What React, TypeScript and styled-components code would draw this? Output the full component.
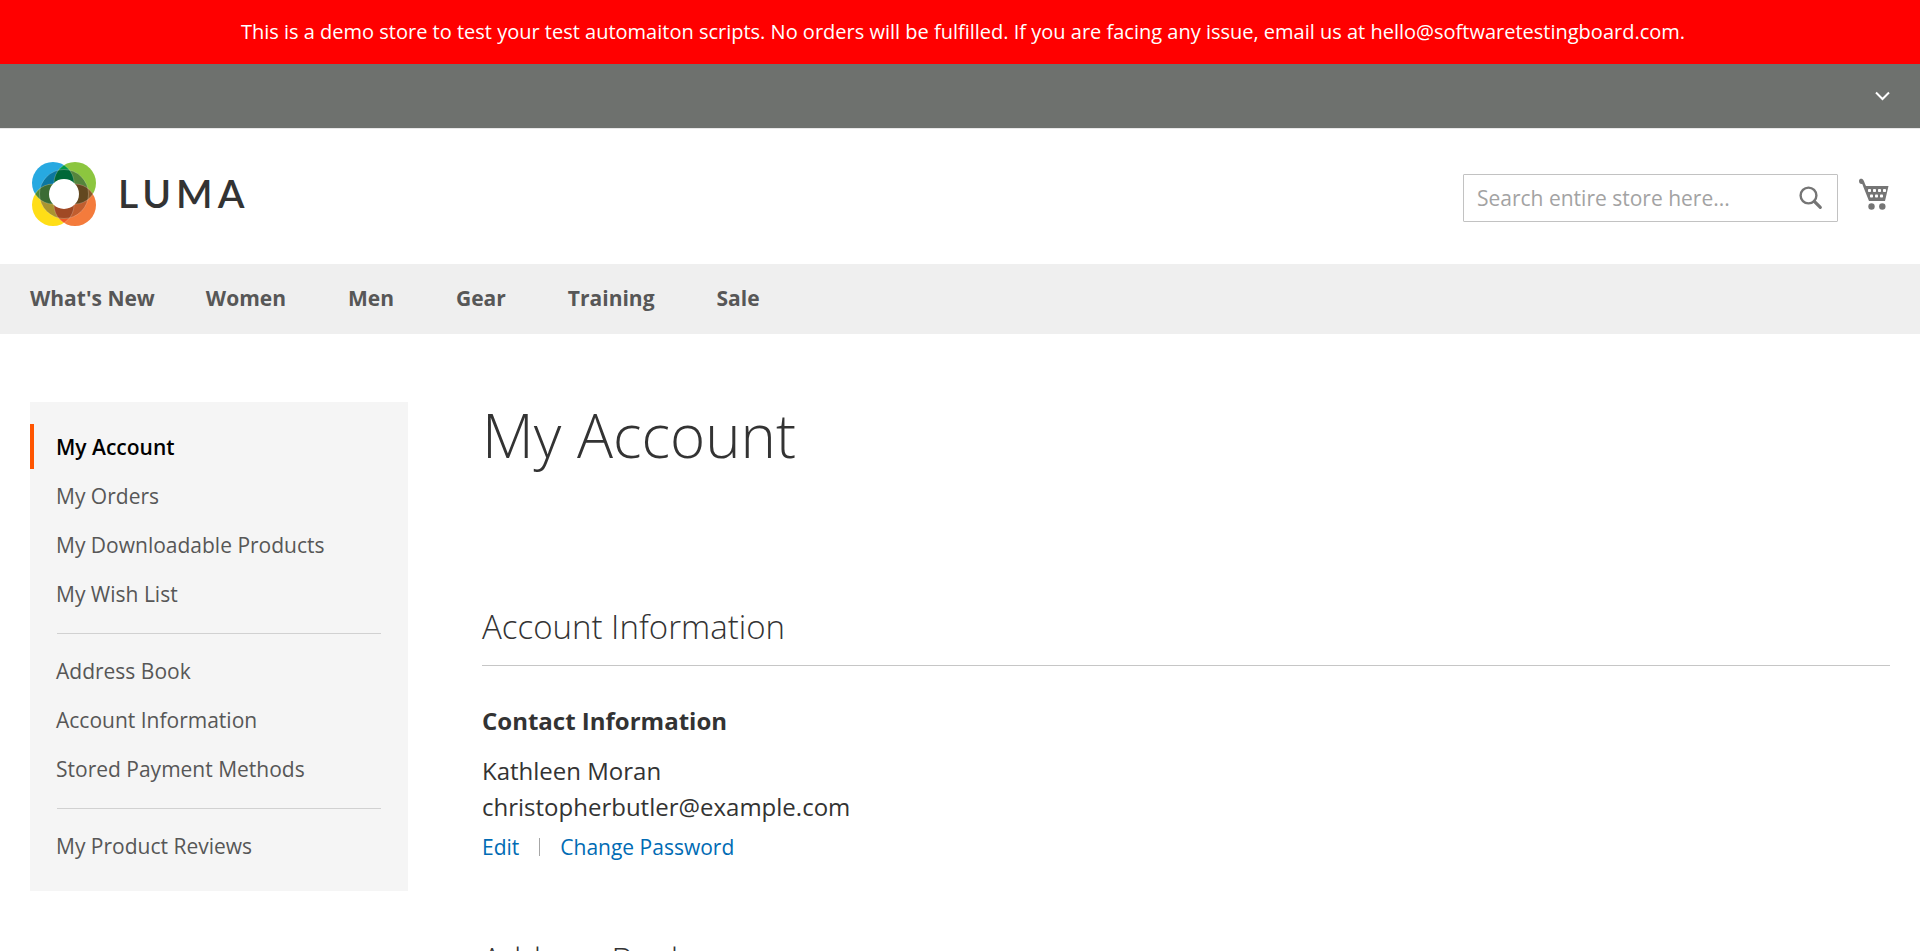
import React from "react";
import styled, { createGlobalStyle } from "styled-components";

const GlobalStyle = createGlobalStyle`
  *, *::before, *::after { box-sizing: border-box; }
  body {
    margin: 0;
    background: #fff;
    color: #333;
    font-family: "Open Sans", "Noto Sans", sans-serif;
    font-size: 21px;
    line-height: 30px;
  }
  ul { margin: 0; padding: 0; list-style: none; }
  h1, h2, h3, p, address { margin: 0; }
  a { text-decoration: none; }
  svg { display: block; }
`;

const DemoNotice = styled.p`
  padding: 17px 20px 17px 26px;
  background: #f00;
  color: #fff;
  font-size: 20px;
  text-align: center;
`;

const Panel = styled.div`
  display: flex;
  align-items: center;
  justify-content: flex-end;
  height: 65px;
  padding: 0 30px;
  background: #6e716e;
  border-bottom: 1px solid #e8e8e8;
`;

const IconButton = styled.button`
  display: flex;
  padding: 0;
  border: 0;
  background: none;
  cursor: pointer;
`;

const Header = styled.header`
  display: flex;
  align-items: flex-start;
  justify-content: space-between;
  padding: 33px 30px 38px;
`;

const Brand = styled.a`
  display: flex;
  align-items: flex-start;
  gap: 22px;
  padding-left: 2px;
  color: #333;
`;

const Wordmark = styled.span`
  font-family: Lato, sans-serif;
  font-size: 39px;
  font-weight: 600;
  line-height: 62px;
  letter-spacing: 5px;
`;

const Tools = styled.div`
  display: flex;
  gap: 20px;
  padding-top: 12px;
`;

const SearchForm = styled.form`
  display: flex;
  align-items: center;
  width: 375px;
  height: 48px;
  padding: 0 14px 0 13px;
  border: 1px solid #c2c2c2;
  border-radius: 1px;
`;

const SearchInput = styled.input`
  flex: 1;
  min-width: 0;
  height: 46px;
  padding: 0;
  border: 0;
  outline: 0;
  background: none;
  color: #333;
  font: inherit;
  &::placeholder { color: #a3a3a3; opacity: 1; }
`;

const CartLink = styled.a`
  padding-top: 4px;
  color: #757575;
`;

const NavBar = styled.nav`
  padding: 0 30px 2px;
  background: #efefef;
`;

const NavList = styled.ul`
  display: flex;
  gap: 62px;
`;

const NavItem = styled.li<{ $tight?: boolean }>`
  margin-right: ${(p) => (p.$tight ? "-11px" : "0")};
`;

const NavLink = styled.a`
  color: #575757;
  font-weight: 700;
  line-height: 68px;
`;

const Page = styled.main`
  display: flex;
  align-items: flex-start;
  gap: 74px;
  padding: 68px 30px 60px;
`;

const Sidebar = styled.aside`
  flex: 0 0 378px;
  padding: 22px 0 23px;
  background: #f5f5f5;
`;

const SideGroup = styled.ul`
  display: flex;
  flex-direction: column;
  gap: 4px;
`;

const SideDivider = styled.hr`
  height: 1px;
  margin: 17px 27px 14px;
  border: 0;
  background: #d1d1d1;
`;

const SideLink = styled.a<{ $active?: boolean }>`
  display: block;
  padding: 2px 0 0 22px;
  border-left: 4px solid ${(p) => (p.$active ? "#ff5501" : "transparent")};
  color: ${(p) => (p.$active ? "#000" : "#575757")};
  font-weight: ${(p) => (p.$active ? 600 : 400)};
  line-height: 43px;
`;

const Content = styled.div`
  flex: 1;
  min-width: 0;
`;

const PageTitle = styled.h1`
  margin-bottom: 141px;
  font-size: 60px;
  font-weight: 300;
  line-height: 66px;
`;

const Block = styled.section`
  margin-bottom: 80px;
`;

const BlockTitle = styled.h2`
  padding-bottom: 20px;
  border-bottom: 1px solid #c6c6c6;
  font-size: 33px;
  font-weight: 300;
  line-height: 36px;
`;

const BoxTitle = styled.h3`
  margin: 37px 0 14px;
  font-size: 24px;
  font-weight: 700;
  line-height: 36px;
`;

const Contact = styled.address`
  font-size: 24px;
  font-style: normal;
  line-height: 36px;
`;

const Actions = styled.div`
  display: flex;
  align-items: center;
  gap: 20px;
  margin-top: 7px;
`;

const ActionLink = styled.a`
  color: #006bb4;
`;

const ActionDivider = styled.span`
  width: 1px;
  height: 18px;
  background: #a6a6a6;
`;

const LumaMark = () => (
  <svg width="64" height="64" viewBox="0 0 64 64" aria-hidden="true">
    <defs>
      <clipPath id="blue"><circle cx="21" cy="21" r="21" /></clipPath>
      <clipPath id="green"><circle cx="43" cy="21" r="21" /></clipPath>
      <clipPath id="yellow"><circle cx="21" cy="43" r="21" /></clipPath>
      <clipPath id="orange"><circle cx="43" cy="43" r="21" /></clipPath>
    </defs>
    <circle cx="21" cy="21" r="21" fill="#27a9e1" />
    <circle cx="43" cy="21" r="21" fill="#8cc63f" />
    <circle cx="21" cy="43" r="21" fill="#ffde17" />
    <circle cx="43" cy="43" r="21" fill="#f47b3c" />
    <circle cx="43" cy="21" r="21" fill="#00984a" clipPath="url(#blue)" />
    <circle cx="21" cy="43" r="21" fill="#4c8a3a" clipPath="url(#blue)" />
    <circle cx="43" cy="43" r="21" fill="#8a5a2a" clipPath="url(#green)" />
    <circle cx="43" cy="43" r="21" fill="#ef5a28" clipPath="url(#yellow)" />
    <circle cx="32" cy="32" r="24.5" fill="#0c77a0" clipPath="url(#blue)" />
    <circle cx="32" cy="32" r="24.5" fill="#55853c" clipPath="url(#green)" />
    <circle cx="32" cy="32" r="24.5" fill="#a99431" clipPath="url(#yellow)" />
    <circle cx="32" cy="32" r="24.5" fill="#c15d2e" clipPath="url(#orange)" />
    <g clipPath="url(#blue)">
      <circle cx="32" cy="32" r="24.5" fill="#006838" clipPath="url(#green)" />
      <circle cx="32" cy="32" r="24.5" fill="#3b6c34" clipPath="url(#yellow)" />
    </g>
    <g clipPath="url(#orange)">
      <circle cx="32" cy="32" r="24.5" fill="#634820" clipPath="url(#green)" />
      <circle cx="32" cy="32" r="24.5" fill="#a04925" clipPath="url(#yellow)" />
    </g>
    <g fill="none" stroke="#fff" strokeOpacity=".35" strokeWidth=".6">
      <circle cx="32" cy="32" r="24.5" />
      <circle cx="21" cy="21" r="21" clipPath="url(#green)" />
      <circle cx="21" cy="21" r="21" clipPath="url(#yellow)" />
      <circle cx="43" cy="21" r="21" clipPath="url(#blue)" />
      <circle cx="43" cy="21" r="21" clipPath="url(#orange)" />
      <circle cx="21" cy="43" r="21" clipPath="url(#blue)" />
      <circle cx="21" cy="43" r="21" clipPath="url(#orange)" />
      <circle cx="43" cy="43" r="21" clipPath="url(#yellow)" />
      <circle cx="43" cy="43" r="21" clipPath="url(#green)" />
    </g>
    <circle cx="32" cy="32" r="15" fill="#fff" />
  </svg>
);

const ChevronIcon = () => (
  <svg width="15" height="10" viewBox="0 0 15 10" aria-hidden="true">
    <path d="M1 1.5l6.5 6.5L14 1.5" fill="none" stroke="#fff" strokeWidth="2" />
  </svg>
);

const SearchIcon = () => (
  <svg width="24" height="24" viewBox="0 0 24 24" aria-hidden="true">
    <circle cx="9.5" cy="9.5" r="7.9" fill="none" stroke="#757575" strokeWidth="2.4" />
    <path d="M15.3 15.3l6 6" stroke="#757575" strokeWidth="3.2" strokeLinecap="round" />
  </svg>
);

const CartIcon = () => (
  <svg width="32" height="32" viewBox="0 0 32 32" fill="currentColor" aria-hidden="true">
    <path d="M1 3C1 .8 3.2.5 4.6 1.2C5.7 1.8 6 3.5 8 8H30.5L27 23H11L5.6 9.5L4.3 6C2.3 6.4 1 5 1 3Z" />
    <g fill="#fff">
      <rect x="10" y="11" width="3" height="3" rx=".8" />
      <rect x="15" y="11" width="3" height="3" rx=".8" />
      <rect x="20" y="11" width="3" height="3" rx=".8" />
      <rect x="25" y="11" width="3" height="3" rx=".8" />
      <rect x="12" y="16.5" width="3" height="3" rx=".8" />
      <rect x="17" y="16.5" width="3" height="3" rx=".8" />
      <rect x="22" y="16.5" width="3" height="3" rx=".8" />
    </g>
    <circle cx="13.5" cy="28.5" r="3.2" />
    <circle cx="24.3" cy="28.5" r="3.2" />
  </svg>
);

const departments = ["What's New", "Women", "Men", "Gear", "Training", "Sale"];

const accountLinks = [
  ["My Account", "My Orders", "My Downloadable Products", "My Wish List"],
  ["Address Book", "Account Information", "Stored Payment Methods"],
  ["My Product Reviews"],
];

export default function App() {
  return (
    <>
      <GlobalStyle />
      <DemoNotice>
        This is a demo store to test your test automaiton scripts. No orders will be fulfilled. If
        you are facing any issue, email us at hello@softwaretestingboard.com.
      </DemoNotice>
      <Panel>
        <IconButton type="button" aria-label="Customer menu">
          <ChevronIcon />
        </IconButton>
      </Panel>
      <Header>
        <Brand href="#">
          <LumaMark />
          <Wordmark>LUMA</Wordmark>
        </Brand>
        <Tools>
          <SearchForm role="search">
            <SearchInput
              type="text"
              aria-label="Search"
              placeholder="Search entire store here..."
            />
            <IconButton type="submit" aria-label="Search">
              <SearchIcon />
            </IconButton>
          </SearchForm>
          <CartLink href="#" aria-label="My Cart">
            <CartIcon />
          </CartLink>
        </Tools>
      </Header>
      <NavBar>
        <NavList>
          {departments.map((name, i) => (
            <NavItem key={name} $tight={i === 0}>
              <NavLink href="#">{name}</NavLink>
            </NavItem>
          ))}
        </NavList>
      </NavBar>
      <Page>
        <Sidebar>
          {accountLinks.map((group, i) => (
            <React.Fragment key={group[0]}>
              {i > 0 && <SideDivider />}
              <SideGroup>
                {group.map((name) => (
                  <li key={name}>
                    <SideLink href="#" $active={name === "My Account"}>
                      {name}
                    </SideLink>
                  </li>
                ))}
              </SideGroup>
            </React.Fragment>
          ))}
        </Sidebar>
        <Content>
          <PageTitle>My Account</PageTitle>
          <Block>
            <BlockTitle>Account Information</BlockTitle>
            <BoxTitle>Contact Information</BoxTitle>
            <Contact>
              Kathleen Moran
              <br />
              christopherbutler@example.com
            </Contact>
            <Actions>
              <ActionLink href="#">Edit</ActionLink>
              <ActionDivider />
              <ActionLink href="#">Change Password</ActionLink>
            </Actions>
          </Block>
          <Block>
            <BlockTitle>Address Book</BlockTitle>
          </Block>
        </Content>
      </Page>
    </>
  );
}
